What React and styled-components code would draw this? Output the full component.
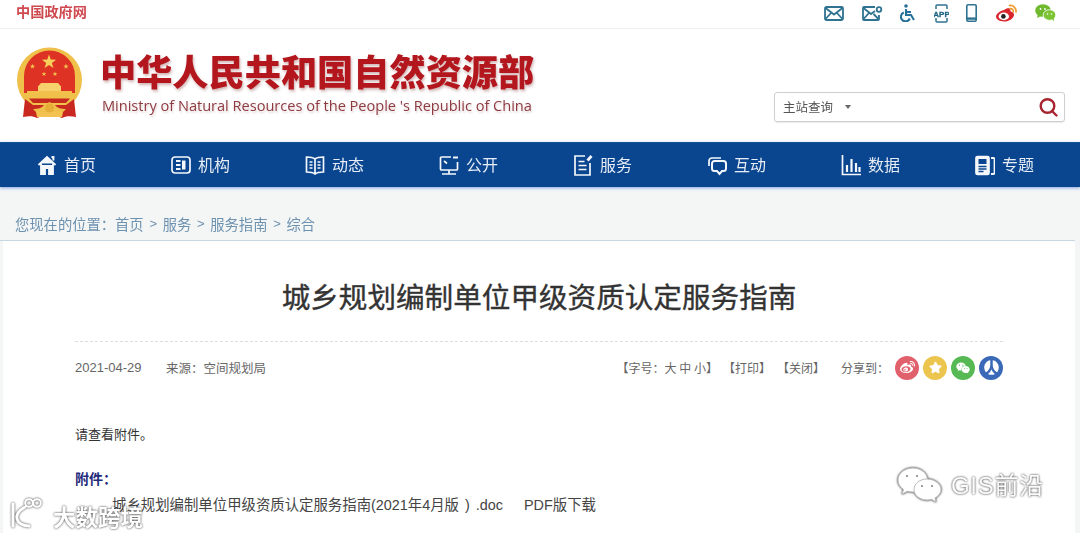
import React from "react";
import styled, { createGlobalStyle } from "styled-components";
import { FaWeibo, FaWeixin, FaRenren, FaStar } from "react-icons/fa";

const Global = createGlobalStyle`
  html, body { margin: 0; padding: 0; height: 533px; overflow: hidden; background: #fff; }
  body { font-family: "Liberation Sans", "Noto Sans CJK SC", sans-serif; color: #333; }
  * { box-sizing: border-box; text-spacing-trim: space-all; }
`;

const CJK = `"Noto Sans CJK SC", "Liberation Sans", sans-serif`;

const Page = styled.div`
  position: relative;
  width: 1080px;
  height: 533px;
  overflow: hidden;
  filter: blur(0.45px);
`;

const TopBar = styled.div`
  height: 29px;
  border-bottom: 1px solid #eeeeee;
  display: flex;
  align-items: center;
  justify-content: space-between;
  padding: 0 24px 2px 16px;
`;
const GovLink = styled.a`
  font: 700 14.2px/20px ${CJK};
  color: #cf4a50;
  margin-bottom: 5px;
`;
const TopIcons = styled.div`
  display: flex;
  align-items: center;
  gap: 17.5px;
`;

const Header = styled.header`
  height: 113px;
  padding: 18px 15px 0 16px;
  display: flex;
  background: #fff;
`;
const Emblem = styled.svg`
  width: 67px;
  height: 72px;
  flex: none;
`;
const Names = styled.div`
  margin-left: 19px;
  width: 440px;
`;
const NameCn = styled.div`
  font: 900 36.2px/46px ${CJK};
  color: #b3161c;
  white-space: nowrap;
  margin-left: -2px;
  text-shadow: 1px 2px 3px rgba(120, 40, 40, 0.35);
`;
const NameEn = styled.div`
  margin-top: 2px;
  font: 400 14.6px/20px "Open Sans", sans-serif;
  letter-spacing: -0.02px;
  color: #8e3a40;
  white-space: nowrap;
  text-shadow: 1px 2px 2px rgba(150, 90, 90, 0.25);
`;
const SearchBox = styled.div`
  margin-left: auto;
  margin-top: 45px;
  width: 291px;
  height: 30px;
  border: 1px solid #cfcfcf;
  border-radius: 3px;
  box-shadow: 0 1px 1px rgba(0, 0, 0, 0.08);
  display: flex;
  align-items: center;
  padding: 0 6px 0 8px;
`;
const SearchLabel = styled.span`
  font: 400 12.5px/16px ${CJK};
  color: #555;
`;
const Caret = styled.i`
  margin-left: 12px;
  width: 0;
  height: 0;
  border: 3.5px solid transparent;
  border-top: 4px solid #666;
  border-bottom: 0;
`;
const SearchGlyph = styled.svg`
  margin-left: auto;
  width: 20px;
  height: 20px;
`;

const Nav = styled.nav`
  height: 45px;
  background: #0a458f;
  border-top: 1px solid #14558f;
  box-shadow: 0 1px 3px rgba(60, 110, 220, 0.6);
  padding-left: 37px;
  display: grid;
  grid-template-columns: repeat(7, 134px) auto;
  align-items: center;
  position: relative;
`;
const NavItem = styled.a`
  display: flex;
  align-items: center;
  gap: 7px;
  font: 400 16px/22px ${CJK};
  color: #e6edf6;
`;
const NavLabel = styled.span`
  margin-bottom: 2px;
`;
const NavGlyph = styled.svg`
  width: 20px;
  height: 22px;
  flex: none;
  fill: none;
  stroke: #f4f7fb;
  stroke-width: 1.7;
`;

const Main = styled.main`
  background: #f4f5f5;
  height: 346px;
  padding: 0 5px 0 3px;
`;
const Crumbs = styled.div`
  height: 54px;
  margin-left: 12px;
  padding-top: 26px;
  font: 400 14.3px/22px ${CJK};
  color: #6d92b0;
  display: flex;
  white-space: pre;
`;
const CrumbSep = styled.span`
  width: 19px;
  text-align: center;
  font-family: "Liberation Sans", sans-serif;
  font-size: 13px;
`;
const Panel = styled.section`
  position: relative;
  height: 292px;
  margin-left: -3px;
  background: #fff;
  padding: 35px 72px 0 75px;
  &::before {
    content: "";
    position: absolute;
    left: 0;
    right: 0;
    top: -1px;
    height: 1px;
    background: #c8d6e2;
  }
  &::after {
    content: "";
    position: absolute;
    left: 0;
    top: 0;
    bottom: 0;
    width: 3px;
    background: #f4f5f5;
  }
`;
const Title = styled.h1`
  margin: 0;
  text-align: center;
  font: 400 28.6px/40px ${CJK};
  -webkit-text-stroke: 0.35px #333;
  color: #333;
  white-space: nowrap;
`;
const Meta = styled.div`
  margin-top: 25px;
  height: 54px;
  border-top: 1px dashed #dddddd;
  display: flex;
  align-items: center;
  padding-bottom: 2px;
  font: 400 12px/18px ${CJK};
  color: #666;
`;
const Date_ = styled.span`
  font: 400 13px/18px "Liberation Sans", sans-serif;
  width: 91px;
`;
const Source = styled.span`
  font-size: 12.5px;
`;
const MetaRight = styled.div`
  margin-left: auto;
  display: flex;
  align-items: center;
`;
const Tool = styled.span`
  margin-right: ${(p) => p.$gap || 0}px;
  white-space: pre;
`;
const ShareRow = styled.div`
  display: flex;
  gap: 4px;
  margin-left: 6px;
`;
const ShareDot = styled.span`
  width: 24px;
  height: 24px;
  border-radius: 50%;
  background: ${(p) => p.$bg};
  color: #fff;
  display: flex;
  align-items: center;
  justify-content: center;
  font-size: ${(p) => p.$size || 14}px;
`;
const Para = styled.p`
  margin: 27px 0 0;
  font: 400 13px/24px ${CJK};
  color: #333;
`;
const AttachHead = styled.div`
  margin-top: 20px;
  font: 700 14px/24px ${CJK};
  color: #1f2a7a;
`;
const AttachRow = styled.div`
  margin-top: 3px;
  padding-left: 37px;
  display: flex;
  gap: 21px;
  font: 400 14.4px/24px "Liberation Sans", "Noto Sans CJK SC", sans-serif;
  word-spacing: 2px;
  color: #444;
  white-space: pre;
`;

const MarkLeft = styled.div`
  position: absolute;
  left: 10px;
  top: 496px;
  display: flex;
  align-items: center;
  gap: 3px;
  color: #fff;
  filter: drop-shadow(0 0 1px rgba(0, 0, 0, 0.8));
`;
const MarkLeftText = styled.span`
  font: 700 22.5px/32px ${CJK};
  margin-top: 4px;
  color: #fff;
`;
const MarkRight = styled.div`
  position: absolute;
  left: 897px;
  top: 466px;
  display: flex;
  align-items: center;
  gap: 8px;
  filter: drop-shadow(0 0 1px rgba(0, 0, 0, 0.85));
`;
const MarkRightText = styled.span`
  font: 400 24px/36px "Liberation Sans", ${CJK};
  color: #fbfbfb;
  letter-spacing: 0.7px;
  margin-top: 2px;
`;

const Mail = () => (
  <svg width="20" height="15" viewBox="0 0 20 15" fill="none" stroke="#2f7391" strokeWidth="1.8">
    <rect x="1" y="1" width="18" height="13" rx="1.5" />
    <path d="M1.500 2 10 8.500 18.500 2M1.500 13l6-6.500M18.500 13l-6-6.500" />
  </svg>
);
const MailGear = () => (
  <svg width="21" height="15" viewBox="0 0 21 15" fill="none" stroke="#2f7391" strokeWidth="1.8">
    <path d="M13 1H2a1 1 0 0 0-1 1v11a1 1 0 0 0 1 1h14a1 1 0 0 0 1-1V9" />
    <path d="M1.500 2 9 8l4-3M1.500 13l5.500-6M16.500 13l-5-5" />
    <circle cx="17" cy="3.500" r="2.300" />
  </svg>
);
const Wheelchair = () => (
  <svg width="16" height="18" viewBox="0 0 16 18" fill="none" stroke="#26709a" strokeWidth="2.100">
    <circle cx="6" cy="2" r="1.800" fill="#26709a" stroke="none" />
    <path d="M6 5v6h5l3 5" />
    <path d="M6 8h5" />
    <path d="M3.800 8.500a4.600 4.600 0 1 0 6 6" />
  </svg>
);
const AppPhone = () => (
  <svg width="15" height="19" viewBox="0 0 15 19" fill="none" stroke="#2f7391" strokeWidth="1.500">
    <path d="M2 5V2a1 1 0 0 1 1-1h9a1 1 0 0 1 1 1v3M2 14v3a1 1 0 0 0 1 1h9a1 1 0 0 0 1-1v-3" />
    <text x="7.500" y="13" textAnchor="middle" fontSize="8" fontWeight="700" fontFamily="Liberation Sans Narrow, Liberation Sans" fill="#1d6585" stroke="#1d6585" strokeWidth=".3">APP</text>
  </svg>
);
const Phone = () => (
  <svg width="11" height="18" viewBox="0 0 11 18" fill="none" stroke="#2f7391" strokeWidth="1.600">
    <rect x="0.800" y="0.800" width="9.400" height="16.400" rx="1.200" />
    <path d="M1 14.600h9" strokeWidth="2.400" />
  </svg>
);
const WeiboColor = () => (
  <svg width="23" height="19" viewBox="0 0 23 19">
    <path d="M9 6c3-2 6-2.400 6.400 0 .2 1 0 1.400.4 1.500 2.200.6 3.200 1.800 3.200 3.200 0 3.300-4.600 6.800-10 6.800C4.500 17.500 1 15.600 1 12.600 1 10.600 4.500 6.800 9 6Z" fill="#d8242c" />
    <ellipse cx="8.800" cy="12.400" rx="5.200" ry="3.800" fill="#fff" />
    <circle cx="8.400" cy="12.400" r="2.300" fill="#222" />
    <path d="M14.500 1.500c3.800-.6 7 2.500 6.600 6.500M15 4.600c2-.3 3.600 1.300 3.300 3.300" fill="none" stroke="#f09a2e" strokeWidth="1.700" strokeLinecap="round" />
  </svg>
);
const WechatColor = () => (
  <svg width="21" height="18" viewBox="0 0 21 18">
    <ellipse cx="8" cy="6.500" rx="7.800" ry="6.300" fill="#6fba2c" />
    <path d="M3 10l-1 4 4-2Z" fill="#6fba2c" />
    <ellipse cx="14.500" cy="11" rx="6.300" ry="5.300" fill="#7cc433" stroke="#fff" strokeWidth=".8" />
    <path d="M17 15l2 2.500-.2-3.500Z" fill="#7cc433" />
    <circle cx="5.500" cy="5" r=".9" fill="#fff" />
    <circle cx="10" cy="5" r=".9" fill="#fff" />
    <circle cx="12.500" cy="10" r=".8" fill="#fff" />
    <circle cx="16.500" cy="10" r=".8" fill="#fff" />
  </svg>
);

const star = (cx, cy, r) => {
  const pts = [];
  for (let i = 0; i < 10; i++) {
    const a = (Math.PI / 5) * i - Math.PI / 2;
    const q = i % 2 ? r * 0.4 : r;
    pts.push(`${(cx + q * Math.cos(a)).toFixed(2)},${(cy + q * Math.sin(a)).toFixed(2)}`);
  }
  return pts.join(" ");
};

const EmblemArt = () => (
  <Emblem viewBox="0 0 67 72">
    <circle cx="33.500" cy="33" r="32.500" fill="#efc04a" />
    <path d="M8 29a25.500 25.500 0 0 1 51 0v9H8Z" fill="#de3324" />
    <polygon points={star(33, 15, 7.500)} fill="#f7cf5a" />
    <polygon points={star(16.500, 19.500, 2.800)} fill="#f3c250" />
    <polygon points={star(50, 19.500, 2.800)} fill="#f3c250" />
    <polygon points={star(28, 27, 2.600)} fill="#f3c250" />
    <polygon points={star(39, 27, 2.600)} fill="#f3c250" />
    <rect x="8" y="38" width="51" height="8" fill="#de3324" />
    <path d="M25 36h17l2.500 3h-22Z" fill="#f7d26c" />
    <rect x="22" y="39" width="23" height="5" fill="#f7d26c" />
    <rect x="11" y="44" width="45" height="3.500" fill="#f2c14c" />
    <path d="M9 47.500h49l-5 4H14Z" fill="#efc04a" />
    <path d="M13 51.500h41l-4 4.500H17Z" fill="#c62a1f" />
    <path d="M9 52 7 70c6-1 10-1 14 1l12.500-5L46 71c4-2 8-2 14-1l-2-18-8 6H17Z" fill="#c8281f" />
    <path d="M17 62c5 0 9-1 11-4l5.500-3 5.500 3c2 3 6 4 11 4l-3 3H20Z" fill="#efc04a" />
    <path d="M20 65h27l-1 5H21Z" fill="#f3c250" />
    <circle cx="33.500" cy="61" r="4.500" fill="#e6ad38" />
  </Emblem>
);

const Icons = {
  home: (
    <path d="M1.500 11 10 3l8.500 8M4 9.500V20h4v-6h4v6h4V9.500M14.500 3h2v3.500" fill="#f4f7fb" stroke="#f4f7fb" strokeWidth="1.800" />
  ),
  org: (
    <>
      <rect x="1" y="3" width="18" height="16" rx="3" />
      <path d="M12 6.500v9M13.500 6.500v9M5 7h4.500M5 11h4.500M5 15h4.500" strokeWidth="2" />
    </>
  ),
  book: (
    <>
      <path d="M10 5c-2-1.700-5-2-8.500-2v15c3.500 0 6.500.3 8.500 2 2-1.700 5-2 8.500-2V3C15 3 12 3.300 10 5ZM10 5v15" />
      <path d="M4.500 8h3M4.500 11h3M4.500 14h3M12.500 8h3M12.500 11h3M12.500 14h3" strokeWidth="1.300" />
    </>
  ),
  screen: (
    <>
      <path d="M12 3H2.500a1 1 0 0 0-1 1v11a1 1 0 0 0 1 1h15a1 1 0 0 0 1-1V8" />
      <path d="M10 16v4M3 20h14M5 7l3 2.500" />
      <path d="M14 3.500h5" strokeWidth="2" />
    </>
  ),
  note: (
    <>
      <path d="M12 2H2v19h15V9" />
      <path d="M5.500 7.500h6M5.500 11.500h8M5.500 15.500h8" />
      <path d="m14.500 6.500 4-4.500" strokeWidth="2.800" />
    </>
  ),
  chat: (
    <>
      <path d="M2 12V7a3 3 0 0 1 3-3h9" />
      <path d="M7.500 7h9a2.500 2.500 0 0 1 2.500 2.500v5a2.500 2.500 0 0 1-2.500 2.500H15l-2.500 3-2.500-3H7.500A2.500 2.500 0 0 1 5 14.500v-5A2.500 2.500 0 0 1 7.500 7Z" strokeWidth="2" />
    </>
  ),
  chart: (
    <>
      <path d="M1.500 1v19.500H20" />
      <path d="M6 11v7M10.500 5v13M15 9v9M18.500 13v5" strokeWidth="2.200" />
    </>
  ),
  news: (
    <>
      <rect x="1" y="2.500" width="13" height="18" rx="1.500" fill="#f4f7fb" />
      <path d="M3.500 5h8v5h-8z" fill="#0a458f" stroke="none" />
      <path d="M3.500 12.500h8M3.500 15h8M3.500 17.500h5" stroke="#0a458f" strokeWidth="1.300" />
      <path d="M16 4h2.500a1 1 0 0 1 1 1v14a1 1 0 0 1-1 1H16" strokeWidth="1.800" />
    </>
  ),
};

const navItems = [
  ["home", "首页"],
  ["org", "机构"],
  ["book", "动态"],
  ["screen", "公开"],
  ["note", "服务"],
  ["chat", "互动"],
  ["chart", "数据"],
  ["news", "专题"],
];

export default function App() {
  return (
    <Page>
      <Global />
      <TopBar>
        <GovLink>中国政府网</GovLink>
        <TopIcons>
          <Mail />
          <MailGear />
          <Wheelchair />
          <AppPhone />
          <Phone />
          <WeiboColor />
          <WechatColor />
        </TopIcons>
      </TopBar>

      <Header>
        <EmblemArt />
        <Names>
          <NameCn>中华人民共和国自然资源部</NameCn>
          <NameEn>Ministry of Natural Resources of the People 's Republic of China</NameEn>
        </Names>
        <SearchBox>
          <SearchLabel>主站查询</SearchLabel>
          <Caret />
          <SearchGlyph viewBox="0 0 20 20" fill="none" stroke="#a8242e" strokeWidth="2.400">
            <circle cx="9.500" cy="9" r="6.800" />
            <path d="m14 14 4.500 4.500" strokeLinecap="round" />
          </SearchGlyph>
        </SearchBox>
      </Header>

      <Nav>
        {navItems.map(([icon, label]) => (
          <NavItem key={label}>
            <NavGlyph viewBox="0 0 20 22">{Icons[icon]}</NavGlyph>
            <NavLabel>{label}</NavLabel>
          </NavItem>
        ))}
      </Nav>

      <Main>
        <Crumbs>
          您现在的位置：首页<CrumbSep>&gt;</CrumbSep>服务<CrumbSep>&gt;</CrumbSep>服务指南<CrumbSep>&gt;</CrumbSep>综合
        </Crumbs>
        <Panel>
          <Title>城乡规划编制单位甲级资质认定服务指南</Title>
          <Meta>
            <Date_>2021-04-29</Date_>
            <Source>来源：空间规划局</Source>
            <MetaRight>
              <Tool $gap={5}>【字号：大 中 小】</Tool>
              <Tool $gap={6}>【打印】</Tool>
              <Tool $gap={16}>【关闭】</Tool>
              <Tool>分享到：</Tool>
              <ShareRow>
                <ShareDot $bg="#e0606c" $size={15}><FaWeibo /></ShareDot>
                <ShareDot $bg="#ecc54f" $size={13}><FaStar /></ShareDot>
                <ShareDot $bg="#56b953" $size={14}><FaWeixin /></ShareDot>
                <ShareDot $bg="#3a69b7" $size={15}><FaRenren /></ShareDot>
              </ShareRow>
            </MetaRight>
          </Meta>
          <Para>请查看附件。</Para>
          <AttachHead>附件：</AttachHead>
          <AttachRow>
            <span>城乡规划编制单位甲级资质认定服务指南(2021年4月版 ) .doc</span>
            <span>PDF版下载</span>
          </AttachRow>
        </Panel>
      </Main>

      <MarkLeft>
        <svg width="40" height="32" viewBox="0 0 40 32" fill="none" stroke="#fff" strokeWidth="3" strokeLinecap="round">
          <path d="M3 6v22M15 9C8 13 6 17 7 21c1 4 6 7 12 7" />
          <circle cx="19" cy="5" r="3.800" strokeWidth="2" />
          <circle cx="27" cy="5" r="3.800" strokeWidth="2" />
        </svg>
        <MarkLeftText>大数跨境</MarkLeftText>
      </MarkLeft>

      <MarkRight>
        <svg width="46" height="36" viewBox="0 0 46 36" fill="#fff" stroke="#bbbbbb" strokeWidth="1">
          <path d="M16 1C8 1 1 6 1 13c0 4 2 7 5.500 9.500L5 27l5.500-2.700c2 .5 4 .8 6 .8 7 0 14-5 14-12S24 1 16 1Z" />
          <path d="M30 12c-7 0-13 4.500-13 10.500S23 33 30 33c1.500 0 3-.2 4.500-.7L39 35l-1-4c3.500-2 6-5 6-8.500C44 16.500 37 12 30 12Z" />
          <circle cx="10" cy="9" r="1.100" fill="#888" stroke="none" />
          <circle cx="20" cy="9" r="1.100" fill="#888" stroke="none" />
          <circle cx="25" cy="19" r="1.100" fill="#888" stroke="none" />
          <circle cx="35" cy="19" r="1.100" fill="#888" stroke="none" />
        </svg>
        <MarkRightText>GIS前沿</MarkRightText>
      </MarkRight>
    </Page>
  );
}
